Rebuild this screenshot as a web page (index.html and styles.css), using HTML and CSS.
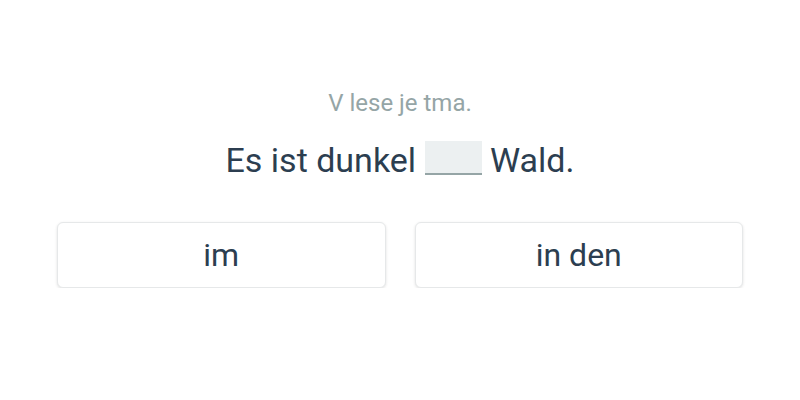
FILE: index.html
```html
<!DOCTYPE html>
<html>
  <head>
    <title>Quiz</title>
    <link rel="stylesheet" href="styles.css">
  </head>

  <body>
    <div class="quiz">
      <p class="hint">V lese je tma.</p>
      <p class="sentence">Es ist dunkel <span class="blank"></span> Wald.</p>
      <div class="answers">
        <button class="answer">im</button>
        <button class="answer">in den</button>
      </div>
    </div>
  </body>
</html>
```

FILE: styles.css
```css
body {
  font-family: Roboto, "Liberation Sans", sans-serif;
  background-color: #fff;
  color: #2c3e50;
  margin: 0;
  padding: 0;
}

.quiz {
  width: 686px;
  margin: 0 auto;
  padding-top: 89px;
  text-align: center;
}

.hint {
  margin: 0;
  font-size: 24px;
  line-height: 28px;
  color: #95a5a6;
}

.sentence {
  margin: 23px 0 0;
  font-size: 34px;
  line-height: 40px;
}

.blank {
  display: inline-block;
  width: 57px;
  height: 32px;
  vertical-align: -3px;
  background-color: #ecf0f1;
  border-bottom: 2px solid #95a5a6;
}

.answers {
  display: flex;
  gap: 29px;
  margin-top: 42px;
}

.answer {
  flex: 1;
  height: 66px;
  background-color: #fff;
  color: #2c3e50;
  font-family: inherit;
  font-size: 32px;
  border: 1px solid #e6e8e9;
  border-radius: 6px;
  box-shadow: 0 1px 3px rgba(0, 0, 0, 0.12);
  cursor: pointer;
}
```
